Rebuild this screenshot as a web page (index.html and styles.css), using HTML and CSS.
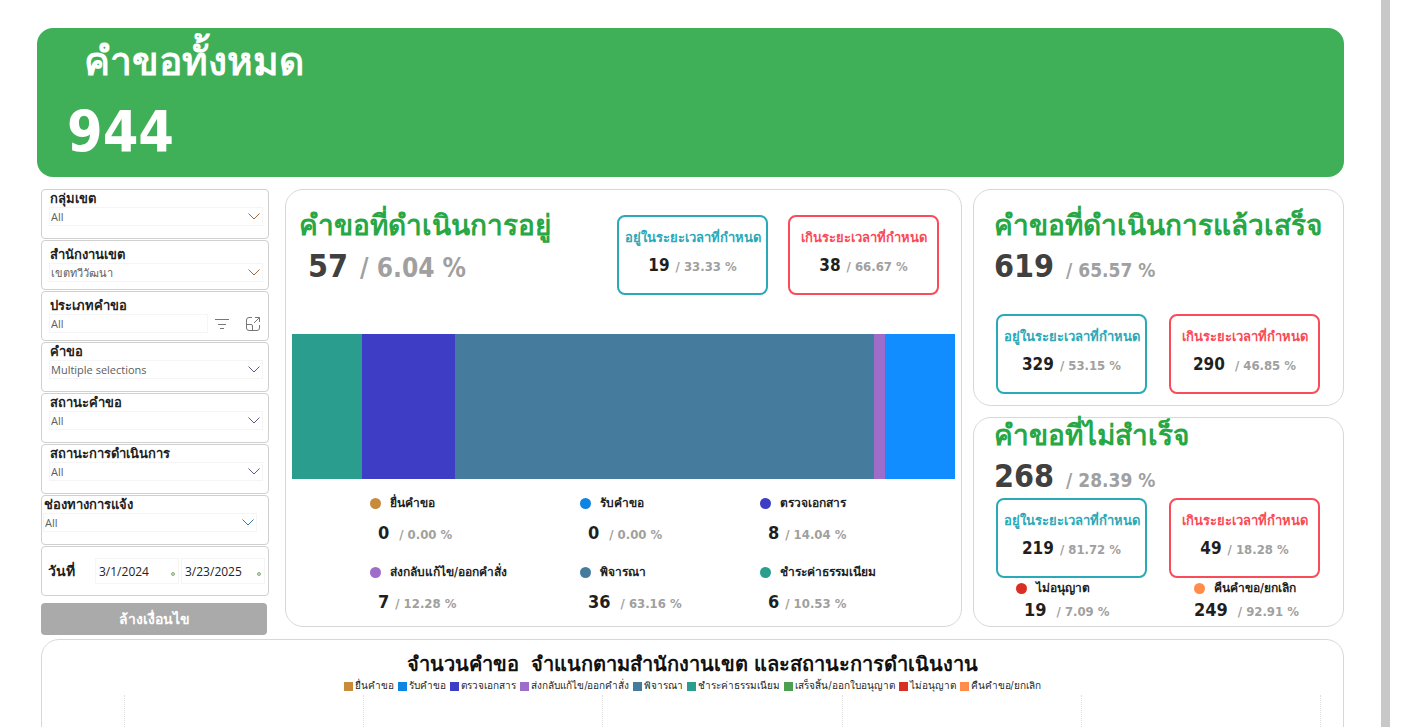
FILE: index.html
```html
<!DOCTYPE html>
<html lang="th">
<head>
<meta charset="utf-8">
<title>คำขอทั้งหมด</title>
<link rel="stylesheet" href="styles.css">
</head>
<body>
<div class="page">
<main class="report">
  <header class="hero">
    <h1 class="hero-title">คำขอทั้งหมด</h1>
    <p class="hero-value">944</p>
  </header>

  <div class="board">
    <form class="filters">
      <div class="filter">
        <label class="filter-label" for="f-group">กลุ่มเขต</label>
        <div class="pick"><select id="f-group"><option>All</option></select><svg class="chev warm" viewBox="0 0 12 7"><path d="M.5.5 6 6 11.500.5"/></svg></div>
      </div>
      <div class="filter low">
        <label class="filter-label" for="f-office">สำนักงานเขต</label>
        <div class="pick"><select id="f-office"><option>เขตทวีวัฒนา</option></select><svg class="chev warm" viewBox="0 0 12 7"><path d="M.5.5 6 6 11.500.5"/></svg></div>
      </div>
      <div class="filter low">
        <label class="filter-label" for="f-type">ประเภทคำขอ</label>
        <div class="pick-row">
          <div class="pick"><select id="f-type"><option>All</option></select></div>
          <button class="icon-btn" type="button" aria-label="ตัวกรอง"><svg width="14" height="14" viewBox="0 0 14 14"><path d="M0 2.500H14M3 7.500H11M5 11.500H9"/></svg></button>
          <button class="icon-btn" type="button" aria-label="ขยาย"><svg width="14" height="14" viewBox="0 0 14 14"><path d="M6 .5H3A2.500 2.500 0 0 0 .5 3V11A2.500 2.500 0 0 0 3 13.500H11A2.500 2.500 0 0 0 13.500 11V8M.5 7.500H5A1.500 1.500 0 0 1 6.500 9V13.500M9 .5H13.500V5M13.500.5 8 6"/></svg></button>
        </div>
      </div>
      <div class="filter">
        <label class="filter-label" for="f-request">คำขอ</label>
        <div class="pick"><select id="f-request"><option>Multiple selections</option></select><svg class="chev" viewBox="0 0 12 7"><path d="M.5.5 6 6 11.500.5"/></svg></div>
      </div>
      <div class="filter">
        <label class="filter-label" for="f-status">สถานะคำขอ</label>
        <div class="pick"><select id="f-status"><option>All</option></select><svg class="chev" viewBox="0 0 12 7"><path d="M.5.5 6 6 11.500.5"/></svg></div>
      </div>
      <div class="filter">
        <label class="filter-label" for="f-progress">สถานะการดำเนินการ</label>
        <div class="pick"><select id="f-progress"><option>All</option></select><svg class="chev" viewBox="0 0 12 7"><path d="M.5.5 6 6 11.500.5"/></svg></div>
      </div>
      <div class="filter flush">
        <label class="filter-label" for="f-channel">ช่องทางการแจ้ง</label>
        <div class="pick"><select id="f-channel"><option>All</option></select><svg class="chev blue" viewBox="0 0 12 7"><path d="M.5.5 6 6 11.500.5"/></svg></div>
      </div>
      <div class="filter dates">
        <label class="filter-label" for="f-from">วันที่</label>
        <div class="date"><input id="f-from" type="text" value="3/1/2024"><span class="date-dot"></span></div>
        <div class="date"><input type="text" value="3/23/2025" aria-label="ถึงวันที่"><span class="date-dot"></span></div>
      </div>
      <button class="clear" type="reset">ล้างเงื่อนไข</button>
    </form>

    <section class="card active">
      <div class="active-head">
        <div class="headline">
          <h2 class="card-title">คำขอที่ดำเนินการอยู่</h2>
          <p class="total wide"><b>57</b><span>/ 6.04 %</span></p>
        </div>
        <div class="kpi teal"><h3>อยู่ในระยะเวลาที่กำหนด</h3><p class="num"><b>19</b><span>/ 33.33 %</span></p></div>
        <div class="kpi red"><h3>เกินระยะเวลาที่กำหนด</h3><p class="num"><b>38</b><span>/ 66.67 %</span></p></div>
      </div>
      <div class="bar">
        <i class="c-green" style="flex-grow:6"></i><i class="c-indigo" style="flex-grow:8"></i><i class="c-steel" style="flex-grow:36"></i><i class="c-purple" style="flex-grow:1"></i><i class="c-azure" style="flex-grow:6"></i>
      </div>
      <div class="stages">
        <div class="stage"><h4><i class="dot c-gold"></i>ยื่นคำขอ</h4><p class="num gap"><b>0</b><span>/ 0.00 %</span></p></div>
        <div class="stage"><h4><i class="dot c-blue"></i>รับคำขอ</h4><p class="num gap"><b>0</b><span>/ 0.00 %</span></p></div>
        <div class="stage"><h4><i class="dot c-indigo"></i>ตรวจเอกสาร</h4><p class="num"><b>8</b><span>/ 14.04 %</span></p></div>
        <div class="stage"><h4><i class="dot c-purple"></i>ส่งกลับแก้ไข/ออกคำสั่ง</h4><p class="num"><b>7</b><span>/ 12.28 %</span></p></div>
        <div class="stage"><h4><i class="dot c-steel"></i>พิจารณา</h4><p class="num gap"><b>36</b><span>/ 63.16 %</span></p></div>
        <div class="stage"><h4><i class="dot c-green"></i>ชำระค่าธรรมเนียม</h4><p class="num"><b>6</b><span>/ 10.53 %</span></p></div>
      </div>
    </section>

    <div class="side">
      <section class="card done">
        <h2 class="card-title">คำขอที่ดำเนินการแล้วเสร็จ</h2>
        <p class="total"><b>619</b><span>/ 65.57 %</span></p>
        <div class="kpis">
          <div class="kpi teal"><h3>อยู่ในระยะเวลาที่กำหนด</h3><p class="num"><b>329</b><span>/ 53.15 %</span></p></div>
          <div class="kpi red"><h3>เกินระยะเวลาที่กำหนด</h3><p class="num gap"><b>290</b><span>/ 46.85 %</span></p></div>
        </div>
      </section>
      <section class="card failed">
        <h2 class="card-title">คำขอที่ไม่สำเร็จ</h2>
        <p class="total"><b>268</b><span>/ 28.39 %</span></p>
        <div class="kpis">
          <div class="kpi teal"><h3>อยู่ในระยะเวลาที่กำหนด</h3><p class="num"><b>219</b><span>/ 81.72 %</span></p></div>
          <div class="kpi red"><h3>เกินระยะเวลาที่กำหนด</h3><p class="num"><b>49</b><span>/ 18.28 %</span></p></div>
        </div>
        <div class="reasons">
          <div class="stage"><h4><i class="dot c-red"></i>ไม่อนุญาต</h4><p class="num gap"><b>19</b><span>/ 7.09 %</span></p></div>
          <div class="stage edge"><h4><i class="dot c-orange"></i>คืนคำขอ/ยกเลิก</h4><p class="num gap"><b>249</b><span>/ 92.91 %</span></p></div>
        </div>
      </section>
    </div>
  </div>

  <section class="card chart">
    <h2 class="chart-title">จำนวนคำขอ&nbsp; จำแนกตามสำนักงานเขต และสถานะการดำเนินงาน</h2>
    <ul class="legend">
      <li><i class="c-gold"></i>ยื่นคำขอ</li>
      <li><i class="c-blue"></i>รับคำขอ</li>
      <li><i class="c-indigo"></i>ตรวจเอกสาร</li>
      <li><i class="c-purple"></i>ส่งกลับแก้ไข/ออกคำสั่ง</li>
      <li><i class="c-steel"></i>พิจารณา</li>
      <li><i class="c-green"></i>ชำระค่าธรรมเนียม</li>
      <li><i class="c-leaf"></i>เสร็จสิ้น/ออกใบอนุญาต</li>
      <li><i class="c-red"></i>ไม่อนุญาต</li>
      <li><i class="c-orange"></i>คืนคำขอ/ยกเลิก</li>
    </ul>
    <div class="plot"><i></i><i></i><i></i><i></i><i></i><i></i></div>
  </section>
</main>
<div class="rail"></div>
</div>
</body>
</html>
```
FILE: styles.css
```css
* { box-sizing: border-box; }
body, h1, h2, h3, h4, p, ul { margin: 0; padding: 0; }
body {
  background: #fff;
  color: #1f1f1f;
  font-family: "DejaVu Sans Condensed", "DejaVu Sans", "Noto Sans", sans-serif;
  font-size: 12px;
}
.page { display: flex; height: 100vh; overflow: hidden; padding-right: 38px; }
.report { flex: 1; min-width: 0; display: flex; flex-direction: column; padding: 28px 37px 0; }
.rail { width: 9px; background: #c8c8c8; }

.hero {
  flex: none;
  height: 149px;
  padding: 12px 30px;
  border-radius: 16px;
  background: #40b058;
  color: #fff;
}
.hero-title { padding-left: 17px; font-size: 39px; line-height: 44px; }
.hero-value { padding-top: 16px; font-size: 57px; line-height: 64px; font-weight: 700; }

.board {
  flex: none;
  display: grid;
  grid-template-columns: 228px minmax(0, 1fr) 371px;
  padding: 12px 0 4px 4px;
}
.card { border: 1px solid #d8d8d8; border-radius: 18px; background: #fff; }

.filters { display: flex; flex-direction: column; gap: 1px; }
.filter {
  height: 50px;
  padding: 0 5px 0 7px;
  border: 1px solid #d0d0d0;
  border-radius: 4px;
}
.filter.low { padding-top: 5px; }
.filter.flush { padding: 0 11px 0 1px; }
.filter-label { display: block; padding-left: 1px; font-size: 13px; line-height: 17px; font-weight: 700; }
.pick { position: relative; flex: 1; height: 19px; border: 1px solid #f5f5f5; }
.pick select {
  display: block;
  width: 100%;
  height: 18px;
  padding: 0 0 0 1px;
  border: 0;
  background: none;
  appearance: none;
  color: #605e5c;
  font: 11px/18px "Open Sans", "DejaVu Sans Condensed", sans-serif;
}
.chev { position: absolute; right: 2px; top: 5px; width: 12px; height: 7px; fill: none; stroke: #5c5a8c; pointer-events: none; }
.chev.warm { stroke: #a5673f; }
.chev.blue { stroke: #3a7ca5; }
.pick-row { display: flex; align-items: center; }
.icon-btn { display: flex; padding: 0 0 0 7px; margin-right: 3px; border: 0; background: none; }
.icon-btn + .icon-btn { padding-left: 14px; }
.icon-btn svg { fill: none; stroke: #777; }
.filter.dates { display: flex; align-items: center; gap: 2px; padding: 0 3px 0 5px; }
.dates .filter-label { width: 46px; font-size: 14px; }
.date { position: relative; flex: 1; border: 1px solid #f5f5f5; }
.date input {
  display: block;
  width: 100%;
  height: 24px;
  padding: 0 0 0 3px;
  border: 0;
  background: none;
  color: #252423;
  font: 12px "Open Sans", sans-serif;
}
.date-dot { position: absolute; right: 3px; top: 13px; width: 4px; height: 4px; border: 1px solid #8fae7f; border-radius: 2px; background: #c8d8c0; }
.clear {
  height: 32px;
  margin: 6px 2px 0 0;
  border: 0;
  border-radius: 4px;
  background: #aaa;
  color: #fff;
  font: 700 14px/20px "DejaVu Sans Condensed", sans-serif;
}

.active { margin: 0 11px 8px 16px; padding: 25px 6px 0; }
.active-head { display: flex; height: 119px; padding: 0 16px 0 7px; }
.headline { flex: 1; margin-top: -7px; }
.active-head .kpi + .kpi { margin-left: 20px; }
.card-title { color: #28a745; font-size: 28px; line-height: 36px; font-weight: 700; white-space: nowrap; }
.total { display: flex; align-items: baseline; gap: 12px; line-height: 44px; font-weight: 700; }
.total b { color: #404040; font-size: 32px; }
.total span { color: #a0a0a0; font-size: 19px; line-height: 1; }
.total.wide { padding-left: 9px; }
.total.wide span { font-size: 26px; }

.kpi { width: 151px; height: 80px; padding-top: 11px; border: 2px solid; border-radius: 8px; text-align: center; }
.kpi h3 { font-size: 13px; line-height: 20px; white-space: nowrap; }
.kpi .num { justify-content: center; padding-top: 5px; }
.teal { border-color: #2aa9b8; color: #2aa9b8; }
.red { border-color: #f94b58; color: #f94b58; }
.num { display: flex; align-items: baseline; gap: 6px; line-height: 24px; font-weight: 700; white-space: nowrap; }
.num.gap { gap: 10px; }
.num b { color: #1f1f1f; font-size: 18px; }
.num span { color: #a0a0a0; font-size: 13px; line-height: 1; }
.kpi .num b { font-size: 17px; }

.bar { display: flex; height: 145px; }
.bar i { flex: 0 1 0; }
.stages { display: grid; grid-template-columns: 210fr 180fr 195fr; row-gap: 17px; padding: 14px 0 0 78px; }
.stage h4 { display: flex; align-items: center; gap: 9px; font-size: 12px; line-height: 20px; white-space: nowrap; }
.stage .num { padding: 8px 0 0 8px; }
.dot { width: 11px; height: 11px; border-radius: 50%; }

.side { display: grid; grid-template-columns: minmax(0, 1fr); grid-template-rows: 217px 210px; row-gap: 11px; align-content: start; }
.done, .failed { padding: 18px 23px 0 20px; }
.failed { padding-top: 0; }
.kpis { display: flex; justify-content: space-between; padding: 26px 0 0 2px; }
.failed .kpis { padding-top: 0; }
.reasons { display: grid; grid-template-columns: 178px 1fr; padding-left: 22px; }
.reasons .stage .num { padding-top: 0; }
.reasons .edge .num { padding-left: 0; }

.chart { flex: 1 0 200px; margin-left: 4px; padding-top: 11px; }
.chart-title { text-align: center; color: #111; font-size: 20px; line-height: 26px; }
.legend { display: flex; justify-content: center; gap: 4px; list-style: none; font-size: 10px; line-height: 18px; white-space: nowrap; }
.legend li { display: flex; align-items: center; gap: 2px; }
.legend i { width: 9px; height: 9px; }
.plot { display: flex; justify-content: space-between; height: 120px; margin: 0 22px 0 82px; }
.plot i { border-left: 1px dotted #ddd; }

.c-gold { background: #c98b3a; }
.c-blue { background: #0d85e5; }
.c-azure { background: #118dff; }
.c-indigo { background: #3d3dc6; }
.c-steel { background: #457b9d; }
.c-purple { background: #9d6dc9; }
.c-green { background: #2a9d8f; }
.c-leaf { background: #4b9f50; }
.c-red { background: #d93026; }
.c-orange { background: #ff8c4b; }
```
